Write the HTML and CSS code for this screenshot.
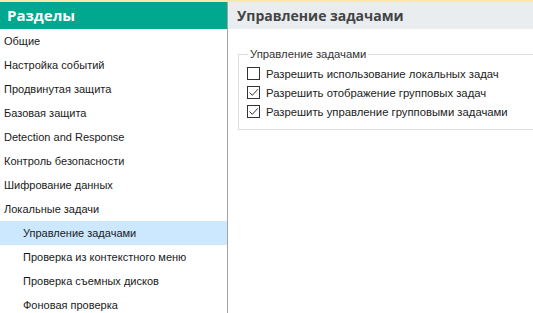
FILE: index.html
```html
<!DOCTYPE html>
<html>
<head>
    <title>Управление задачами</title>
    <link rel="stylesheet" href="styles.css">
</head>
<body>
    <div class="window">
        <!-- Sections list -->
        <div class="sidebar">
            <div class="sidebar-title">Разделы</div>
            <ul class="nav">
                <li>Общие</li>
                <li>Настройка событий</li>
                <li>Продвинутая защита</li>
                <li>Базовая защита</li>
                <li>Detection and Response</li>
                <li>Контроль безопасности</li>
                <li>Шифрование данных</li>
                <li>Локальные задачи</li>
                <li class="sub selected">Управление задачами</li>
                <li class="sub">Проверка из контекстного меню</li>
                <li class="sub">Проверка съемных дисков</li>
                <li class="sub">Фоновая проверка</li>
            </ul>
        </div>

        <!-- Settings pane -->
        <div class="content">
            <div class="content-title">Управление задачами</div>
            <fieldset class="group">
                <legend>Управление задачами</legend>
                <label class="check">
                    <span class="box"></span>
                    Разрешить использование локальных задач
                </label>
                <label class="check">
                    <span class="box">
                        <svg width="11" height="11" viewBox="0 0 11 11"><path d="M1.5 5.5 L4.3 8.3 L9.8 2.3" fill="none" stroke="#333" stroke-width="1"/></svg>
                    </span>
                    Разрешить отображение групповых задач
                </label>
                <label class="check">
                    <span class="box">
                        <svg width="11" height="11" viewBox="0 0 11 11"><path d="M1.5 5.5 L4.3 8.3 L9.8 2.3" fill="none" stroke="#333" stroke-width="1"/></svg>
                    </span>
                    Разрешить управление групповыми задачами
                </label>
            </fieldset>
        </div>
    </div>
</body>
</html>
```

FILE: styles.css
```css
body {
    margin: 0;
    font-family: "Liberation Sans", Arial, sans-serif;
    font-size: 11px;
    color: #1a1a1a;
    background: #fff;
    overflow: hidden;
}

.window {
    display: flex;
    height: 313px;
    border-top: 2px solid #fbe9a6;
    box-sizing: border-box;
}

.sidebar {
    width: 227px;
    flex-shrink: 0;
    border-right: 1px solid #a3a3a3;
}

.sidebar-title {
    height: 27px;
    line-height: 27px;
    padding-left: 7px;
    background: #00a88f;
    color: #fff;
    font-family: "Open Sans", sans-serif;
    font-size: 15px;
    font-weight: bold;
}

.nav {
    list-style: none;
    margin: 0;
    padding: 0;
}

.nav li {
    height: 24px;
    line-height: 24px;
    padding-left: 4px;
    white-space: nowrap;
}

.nav li.sub {
    padding-left: 23px;
}

.nav li.selected {
    background: #cce8ff;
}

.content {
    flex: 1;
    min-width: 0;
}

.content-title {
    height: 27px;
    line-height: 27px;
    padding-left: 9px;
    background: #e9edf0;
    color: #444;
    font-family: "Open Sans", sans-serif;
    font-size: 14px;
    font-weight: bold;
}

.group {
    margin: 19px -20px 0 10px;
    padding: 4px 0 8px 8px;
    border: 1px solid #dcdcdc;
}

.group legend {
    padding: 0 2px;
    margin-left: 1px;
    color: #333;
    font-size: 11.3px;
}

.check {
    display: flex;
    align-items: center;
    gap: 6px;
    height: 19px;
    color: #222;
    font-size: 11.3px;
}

.box {
    width: 11px;
    height: 11px;
    border: 1px solid #333;
    display: flex;
    align-items: center;
    justify-content: center;
    background: #fff;
}
```
